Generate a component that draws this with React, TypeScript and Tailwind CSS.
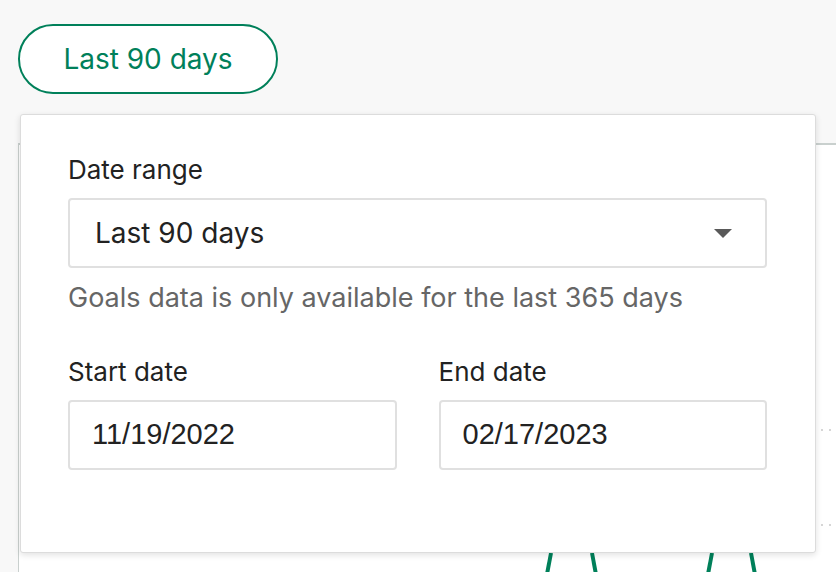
const sans = "font-['Inter','Noto_Sans',sans-serif]";

function Caret() {
  return (
    <svg viewBox="0 0 20 10" className="h-[9px] w-[20px] text-[#595959]" fill="currentColor" aria-hidden>
      <path d="M0 0h20L10 10Z" />
    </svg>
  );
}

function ChartBits() {
  return (
    <svg className="absolute inset-0 h-full w-full" aria-hidden>
      <g stroke="#00805a" strokeWidth="4" fill="none">
        <line x1="532" y1="408" x2="526" y2="440" />
        <line x1="573" y1="408" x2="579" y2="440" />
        <line x1="693" y1="408" x2="687" y2="440" />
        <line x1="732" y1="408" x2="738" y2="440" />
      </g>
      <g stroke="#d6d6d6" strokeWidth="2" strokeDasharray="2 6">
        <line x1="802" y1="285" x2="840" y2="285" />
        <line x1="802" y1="380" x2="840" y2="380" />
      </g>
    </svg>
  );
}

export default function App() {
  return (
    <div className={`relative h-screen overflow-hidden bg-[#f8f8f8] ${sans}`}>
      <div className="px-[18px] pt-[24px]">
        <button className="flex h-[70px] w-[260px] items-center justify-center rounded-full border-2 border-[#00805a] bg-white text-[28px] text-[#00805a]">
          Last 90 days
        </button>
      </div>

      <div className="relative ml-[18px] mt-[49px] h-[500px] border-l border-t-2 border-[#c9d0ce] bg-white">
        <ChartBits />
      </div>

      <div className="absolute left-[20px] top-[114px] w-[796px] rounded-[3px] border border-[#dcdcdc] bg-white pb-[82px] pl-[47px] pr-[48px] pt-[41px] shadow-[0_2px_6px_rgba(0,0,0,0.12)]">
        <div className="text-[26px] leading-[28px] text-[#222]">Date range</div>
        <div className="mt-[14px] flex h-[70px] items-center justify-between rounded-[4px] border-2 border-[#e0e0e0] pl-[25px] pr-[32px] text-[28px] text-[#222]">
          <span>Last 90 days</span>
          <Caret />
        </div>
        <div className="mt-[16px] text-[27px] leading-[28px] text-[#666]">
          Goals data is only available for the last 365 days
        </div>

        <div className="mt-[46px] grid grid-cols-2 gap-x-[42px]">
          {[
            ["Start date", "11/19/2022"],
            ["End date", "02/17/2023"],
          ].map(([label, value]) => (
            <div key={label}>
              <div className="text-[26px] leading-[28px] text-[#222]">{label}</div>
              <div className="mt-[14px] flex h-[70px] items-center rounded-[4px] border-2 border-[#e0e0e0] pl-[22px] font-['Liberation_Sans',Arial,sans-serif] text-[29px] text-[#222]">
                {value}
              </div>
            </div>
          ))}
        </div>
      </div>
    </div>
  );
}
